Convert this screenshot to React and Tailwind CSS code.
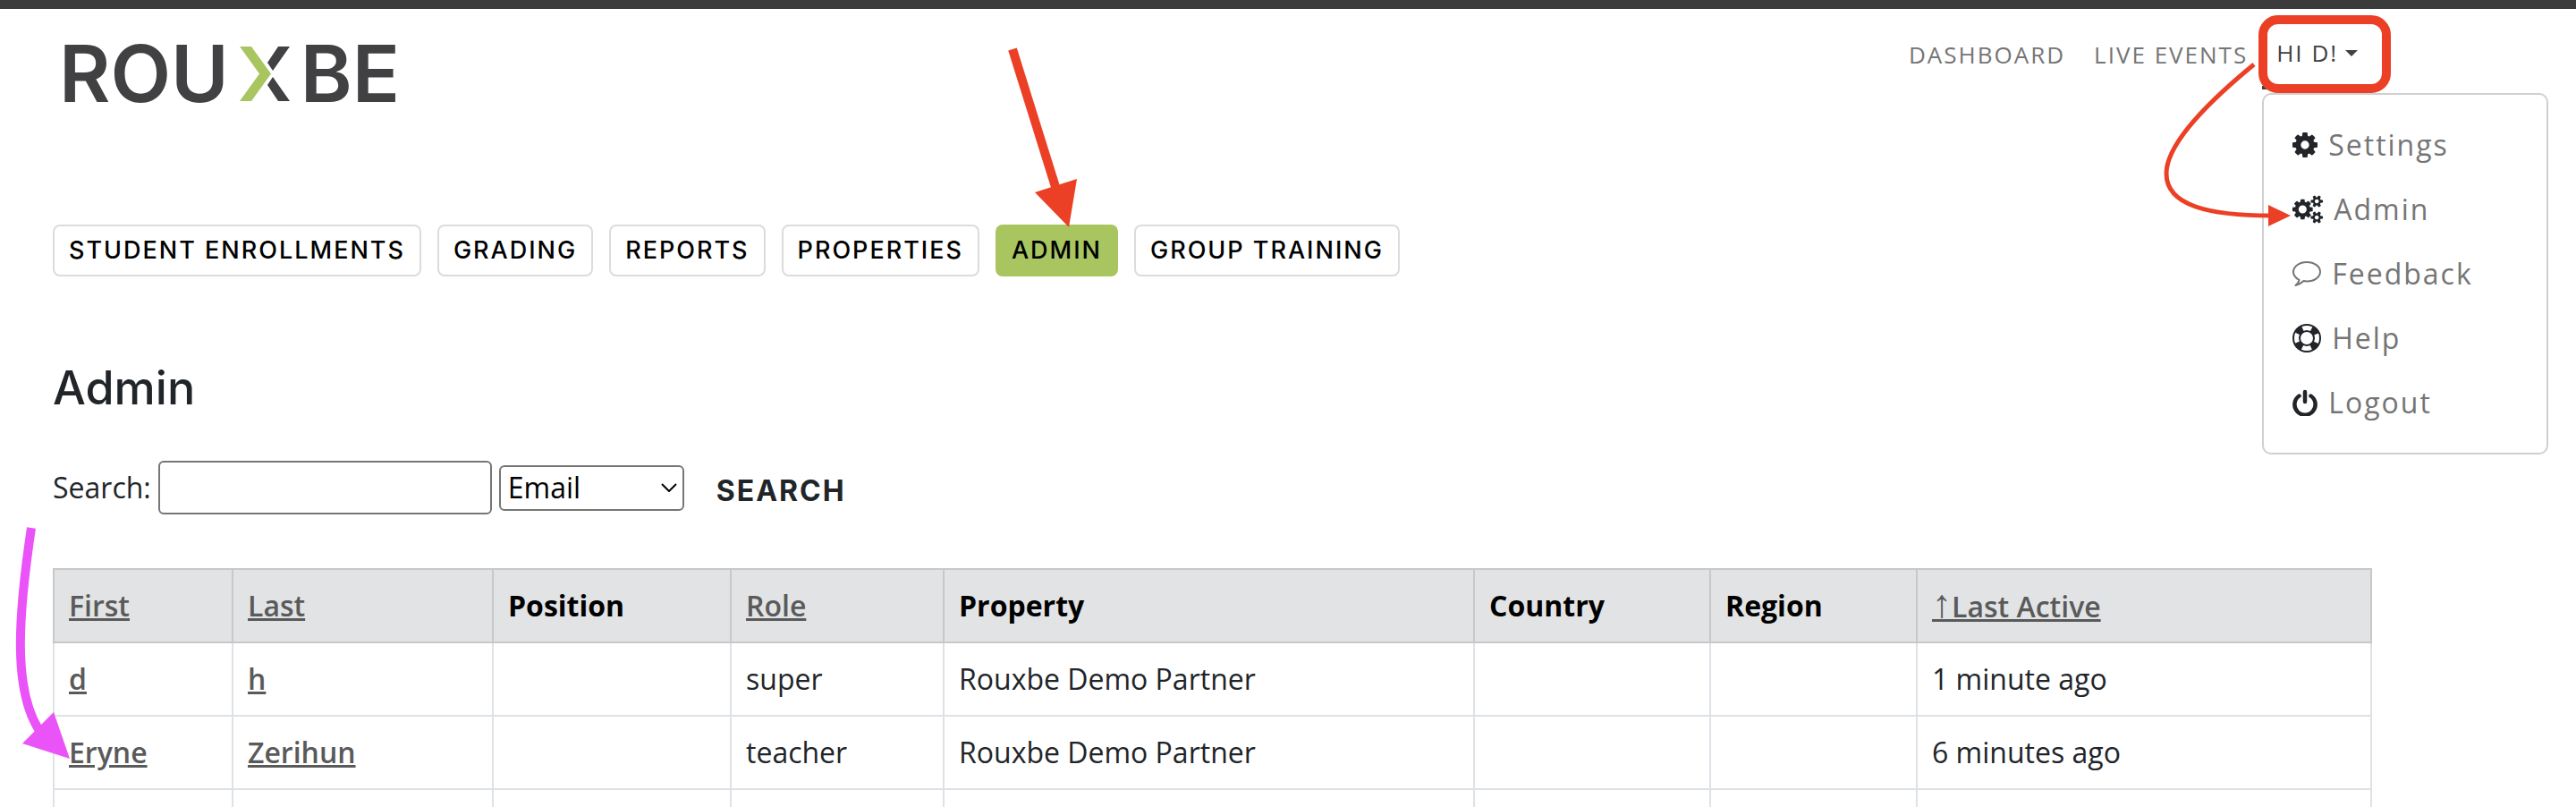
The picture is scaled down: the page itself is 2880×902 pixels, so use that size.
const tabs = ['Student Enrollments', 'Grading', 'Reports', 'Properties', 'Admin', 'Group Training'];

const columns = [
  { label: 'First', sortable: true, width: 'w-[200px]' },
  { label: 'Last', sortable: true, width: 'w-[291px]' },
  { label: 'Position', width: 'w-[266px]' },
  { label: 'Role', sortable: true, width: 'w-[238px]' },
  { label: 'Property', width: 'w-[593px]' },
  { label: 'Country', width: 'w-[264px]' },
  { label: 'Region', width: 'w-[231px]' },
  { label: 'Last Active', sortable: true, sorted: true, width: 'w-[508px]' },
];

const users = [
  { first: 'd', last: 'h', role: 'super', property: 'Rouxbe Demo Partner', lastActive: '1 minute ago' },
  { first: 'Eryne', last: 'Zerihun', role: 'teacher', property: 'Rouxbe Demo Partner', lastActive: '6 minutes ago' },
  { first: '', last: '', role: '', property: '', lastActive: '' },
];

function CogIcon() {
  return (
    <svg viewBox="128 128 1536 1536" className="size-7 text-[#212529]" fill="currentColor">
      <path d="M1152 896q0-106-75-181t-181-75-181 75-75 181 75 181 181 75 181-75 75-181zm512-109v222q0 12-8 23t-20 13l-185 28q-19 54-39 91 35 50 107 138 10 12 10 25t-9 23q-27 37-99 108t-94 71q-12 0-26-9l-138-108q-44 23-91 38-16 136-29 186-7 28-36 28h-222q-14 0-24.500-8.500t-11.500-21.500l-28-184q-49-16-90-37l-141 107q-10 9-25 9-14 0-25-11-126-114-165-168-7-10-7-23 0-12 8-23 15-21 51-66.500t54-70.500q-27-50-41-99l-183-27q-13-2-21-12.500t-8-23.500v-222q0-12 8-23t19-13l186-28q14-46 39-92-40-57-107-138-10-12-10-24 0-10 9-23 26-36 98.500-107.500t94.500-71.500q13 0 26 10l138 107q44-23 91-38 16-136 29-186 7-28 36-28h222q14 0 24.500 8.500t11.500 21.500l28 184q49 16 90 37l142-107q9-9 24-9 13 0 25 10 129 119 165 170 7 8 7 22 0 12-8 23-15 21-51 66.500t-54 70.500q26 50 41 98l183 28q13 2 21 12.500t8 23.500z" />
    </svg>
  );
}

function CogsIcon() {
  return (
    <svg viewBox="0 0 1920 1792" className="h-8 w-[34px] text-[#212529]" fill="currentColor">
      <path d="M896 896q0-106-75-181t-181-75-181 75-75 181 75 181 181 75 181-75 75-181zm768 512q0-52-38-90t-90-38-90 38-38 90q0 53 37.500 90.500t90.500 37.500 90.500-37.500 37.500-90.500zm0-1024q0-52-38-90t-90-38-90 38-38 90q0 53 37.500 90.500t90.500 37.500 90.500-37.500 37.500-90.500zm-384 421v185q0 10-7 19.500t-16 10.500l-155 24q-11 35-32 76 34 48 90 115 7 11 7 20 0 12-7 19-23 30-82.500 89.500t-78.500 59.500q-11 0-21-7l-115-90q-37 19-77 31-11 108-23 155-7 24-30 24h-186q-11 0-20-7.500t-10-17.500l-23-153q-34-10-75-31l-118 89q-7 7-20 7-11 0-21-8-144-133-144-160 0-9 7-19 10-14 41-53t47-61q-23-44-35-82l-152-24q-10-1-17-9.500t-7-19.500v-185q0-10 7-19.500t16-10.500l155-24q11-35 32-76-34-48-90-115-7-11-7-20 0-12 7-20 22-30 82-89t79-59q11 0 21 7l115 90q34-18 77-32 11-108 23-154 7-24 30-24h186q11 0 20 7.500t10 17.500l23 153q34 10 75 31l118-89q8-7 20-7 11 0 21 8 144 133 144 160 0 8-7 19-12 16-42 54t-45 60q23 48 34 82l152 23q10 2 17 10.500t7 19.500zm640 533v140q0 16-149 31-12 27-30 52 51 113 51 138 0 4-4 7-122 71-124 71-8 0-46-47t-52-68q-20 2-30 2t-30-2q-14 21-52 68t-46 47q-2 0-124-71-4-3-4-7 0-25 51-138-18-25-30-52-149-15-149-31v-140q0-16 149-31 13-29 30-52-51-113-51-138 0-4 4-7 4-2 35-20t59-34 30-16q8 0 46 46.500t52 67.500q20-2 30-2t30 2q51-71 92-112l6-2q4 0 124 70 4 3 4 7 0 25-51 138 17 23 30 52 149 15 149 31zm0-1024v140q0 16-149 31-12 27-30 52 51 113 51 138 0 4-4 7-122 71-124 71-8 0-46-47t-52-68q-20 2-30 2t-30-2q-14 21-52 68t-46 47q-2 0-124-71-4-3-4-7 0-25 51-138-18-25-30-52-149-15-149-31v-140q0-16 149-31 13-29 30-52-51-113-51-138 0-4 4-7 4-2 35-20t59-34 30-16q8 0 46 46.500t52 67.500q20-2 30-2t30 2q51-71 92-112l6-2q4 0 124 70 4 3 4 7 0 25-51 138 17 23 30 52 149 15 149 31z" />
    </svg>
  );
}

function CommentIcon() {
  return (
    <svg viewBox="0 0 32 28" className="h-7 w-8" fill="none" stroke="currentColor" strokeWidth="2" strokeLinejoin="round">
      <path d="M16 1C7.500 1 1 6 1 12c0 3.600 2.300 6.600 6.500 8.800C7.300 23 5.500 25 3.500 27c4-.8 6.500-2.600 9-5 1.300.3 2.300.4 3.500.4 8.500 0 15-4.600 15-10.600S24.500 1 16 1z" />
    </svg>
  );
}

function LifeRingIcon() {
  return (
    <svg viewBox="0 0 32 32" className="size-8 text-[#212529]" fill="none" stroke="currentColor" strokeWidth="2">
      <circle cx="16" cy="16" r="15" />
      <circle cx="16" cy="16" r="8" />
      <circle cx="16" cy="16" r="11.500" strokeWidth="8" strokeDasharray="8.060 10" strokeDashoffset="-5" />
    </svg>
  );
}

function PowerIcon() {
  return (
    <svg viewBox="0 0 28 30" className="h-[30px] w-7 text-[#212529]" fill="none" stroke="currentColor" strokeWidth="4.500" strokeLinecap="round">
      <path d="M14 3v11M7.500 7.500a11.600 11.600 0 1 0 13 0" />
    </svg>
  );
}

const menuItems = [
  { label: 'Settings', icon: <CogIcon /> },
  { label: 'Admin', icon: <CogsIcon /> },
  { label: 'Feedback', icon: <CommentIcon /> },
  { label: 'Help', icon: <LifeRingIcon /> },
  { label: 'Logout', icon: <PowerIcon /> },
];

function Logo() {
  return (
    <a href="#" aria-label="Rouxbe" className="flex items-center gap-3 font-['Inter',sans-serif] text-[88px] leading-[88px] font-semibold text-[#414042]">
      <span>ROU</span>
      <svg viewBox="0 0 56 61" className="h-[61px] w-14">
        <path d="M0 0h13l22 30.500L13 61H0l22-30.500z" fill="#a8c560" />
        <path d="M43 0h13L37 27l-6-9zM43 61h13L37 34l-6 9z" fill="#414042" />
      </svg>
      <span>BE</span>
    </a>
  );
}

function UserMenu() {
  return (
    <div className="relative">
      <button className="flex h-[78px] items-center gap-2 border-b-4 border-[#414042] pr-4 pl-4 tracking-[2px] text-[#414042] uppercase">
        Hi d!
        <span className="border-x-[7px] border-t-[7px] border-x-transparent border-t-[#414042]" />
      </button>
      <div className="absolute top-[82px] left-0 w-[320px] rounded-[10px] border-2 border-[#d0d0d0] bg-white py-5 pl-8 text-[32px] text-[#757575]">
        {menuItems.map((item) => (
          <a key={item.label} href="#" className="flex h-[72px] items-center gap-3 tracking-[2px]">
            {item.icon}
            {item.label}
          </a>
        ))}
      </div>
    </div>
  );
}

function Annotations() {
  return (
    <svg className="pointer-events-none absolute -top-[10px] left-0" width="2880" height="902" fill="none" aria-hidden="true">
      <path d="M1132 55L1181 212" stroke="#eb4025" strokeWidth="10" />
      <path d="M1157 215L1204 200L1195 254z" fill="#eb4025" />
      <rect x="2530" y="22" width="138" height="77" rx="17" stroke="#eb4025" strokeWidth="10" />
      <path d="M2520 72C2470 113 2422 160 2422 194C2422 230 2470 241 2540 241" stroke="#eb4025" strokeWidth="5" />
      <path d="M2536 229L2561 241L2536 253z" fill="#eb4025" />
      <path d="M35 590C20 690 15 770 43 815" stroke="#ea53f7" strokeWidth="10" />
      <path d="M25 831L60 796L78 848z" fill="#ea53f7" />
    </svg>
  );
}

export default function App() {
  return (
    <div className="relative h-screen overflow-hidden border-t-10 border-[#3b3b3b] bg-white font-['Open_Sans',sans-serif] text-[32px] leading-[48px] text-[#212529]">
      <header className="flex items-start justify-between pl-[66px]">
        <div className="pt-7">
          <Logo />
        </div>
        <nav className="flex w-[746px] items-center pt-3 text-[26px] text-[#757575]">
          <a href="#" className="pr-4 tracking-[2px] uppercase">Dashboard</a>
          <a href="#" className="px-4 tracking-[2px] whitespace-nowrap uppercase">Live Events</a>
          <UserMenu />
        </nav>
      </header>

      <main className="px-[59px] pt-[125px]">
        <div className="flex gap-[18px]">
          {tabs.map((tab) => (
            <button
              key={tab}
              className={`h-[58px] rounded-lg border-2 px-4 font-['Inter',sans-serif] text-[27px] font-medium tracking-[2px] text-black uppercase ${tab === 'Admin' ? 'border-[#a8c560] bg-[#a8c560]' : 'border-[#dcdcdc] bg-white'}`}
            >
              {tab}
            </button>
          ))}
        </div>

        <h1 className="mt-24 font-['Inter',sans-serif] text-[52px] leading-[58px] font-medium">Admin</h1>

        <form className="mt-[52px] flex items-center" onSubmit={(e) => e.preventDefault()}>
          <label htmlFor="query">Search:</label>
          <input id="query" type="text" className="ml-2 h-[60px] w-[373px] rounded-md border-2 border-[#767676] px-2" />
          <div className="relative ml-2">
            <select aria-label="Search field" className="block h-[51px] w-[207px] appearance-none rounded-md border-2 border-[#767676] bg-white pl-2 leading-[46px] text-black">
              <option>Email</option>
            </select>
            <svg viewBox="0 0 18 10" className="pointer-events-none absolute top-5 right-2 h-[10px] w-[18px]" fill="none" stroke="#000" strokeWidth="2">
              <path d="M1 1l8 8 8-8" />
            </svg>
          </div>
          <button type="submit" className="ml-9 pt-2 font-['Inter',sans-serif] font-bold tracking-[2px] uppercase">Search</button>
        </form>

        <table className="mt-[60px] w-[2592px] table-fixed border-collapse text-left">
          <thead>
            <tr className="h-[82px] bg-[#e2e3e5] text-black">
              {columns.map((col) => (
                <th key={col.label} className={`border-2 border-[#c6c8ca] px-4 font-bold ${col.width}`}>
                  {col.sortable ? (
                    <a href="#" className="font-semibold text-[#5a5a5a] underline">
                      {col.sorted && <span className="font-['Liberation_Sans',sans-serif] text-[44px] leading-none font-normal">↑</span>}
                      {col.label}
                    </a>
                  ) : (
                    col.label
                  )}
                </th>
              ))}
            </tr>
          </thead>
          <tbody>
            {users.map((user) => (
              <tr key={user.first} className="h-[82px]">
                <td className="border-2 border-[#dee2e6] px-4">
                  <a href="#" className="font-semibold text-[#5a5a5a] underline">{user.first}</a>
                </td>
                <td className="border-2 border-[#dee2e6] px-4">
                  <a href="#" className="font-semibold text-[#5a5a5a] underline">{user.last}</a>
                </td>
                <td className="border-2 border-[#dee2e6] px-4" />
                <td className="border-2 border-[#dee2e6] px-4">{user.role}</td>
                <td className="border-2 border-[#dee2e6] px-4">{user.property}</td>
                <td className="border-2 border-[#dee2e6] px-4" />
                <td className="border-2 border-[#dee2e6] px-4" />
                <td className="border-2 border-[#dee2e6] px-4">{user.lastActive}</td>
              </tr>
            ))}
          </tbody>
        </table>
      </main>

      <Annotations />
    </div>
  );
}
